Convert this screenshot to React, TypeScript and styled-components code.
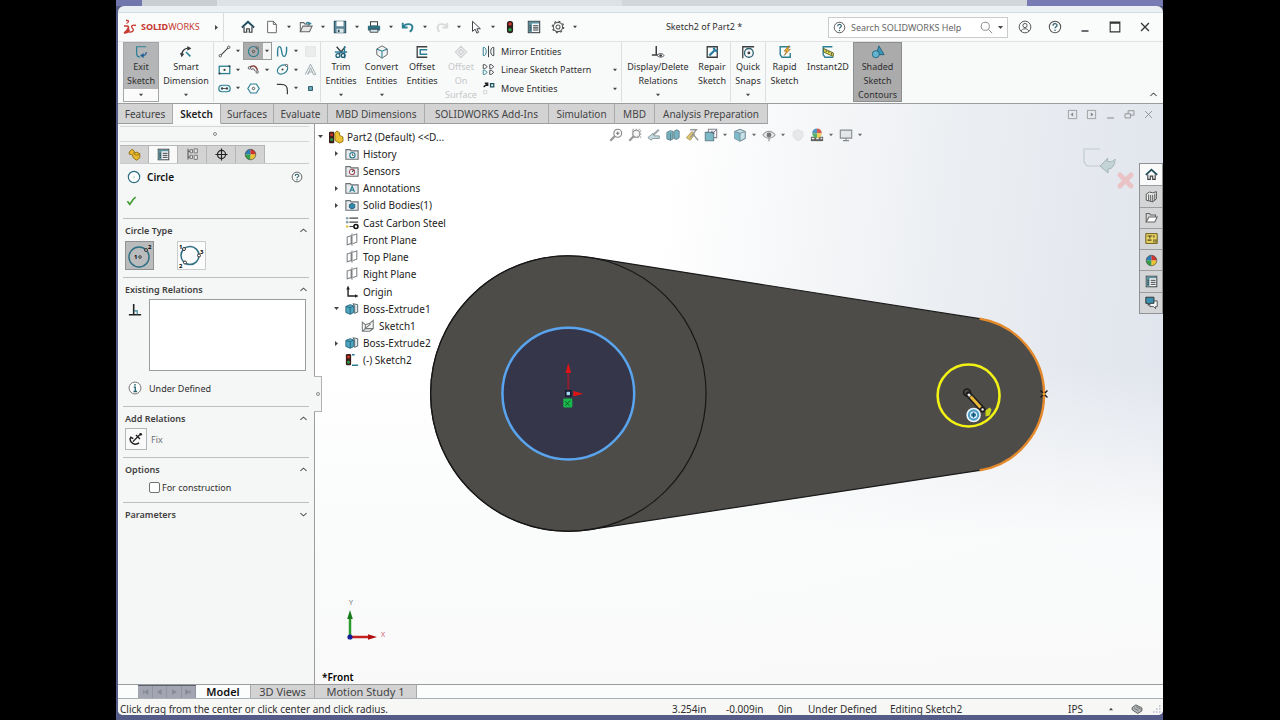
import React from "react";
import styled, { createGlobalStyle, css } from "styled-components";

const color = {
  teal: "#2b7f93",
  sky: "#5fb3cf",
  dark: "#3b3f42",
  ink: "#2f2f2f",
  line: "#9a9c9e",
  soft: "#c9cbcd",
  chrome: "#f6f7f7",
  tab: "#d3d3d4",
  pressed: "#ababac",
};

const GlobalStyle = createGlobalStyle`
  *, *::before, *::after { box-sizing: border-box; }
  body {
    margin: 0;
    background: #000;
    font-family: "Noto Sans", "Open Sans", sans-serif;
    font-size: 9px;
    color: ${color.ink};
  }
  button, input, select {
    font: inherit;
    color: inherit;
    margin: 0;
  }
`;

/* ---------- icons ---------- */

const T = color.teal;
const D = color.dark;

const icons: Record<string, React.ReactNode> = {
  home: (
    <>
      <path d="M1 8.500 8 2l7 6.500" fill="none" stroke="#1f4d5a" strokeWidth="2.200" />
      <path d="M3.500 8v6h3v-4h3v4h3V8" fill="none" stroke={D} strokeWidth="1.400" />
    </>
  ),
  newDoc: <path d="M3 1.500h6.500L13 5v9.500H3zM9.500 1.500V5H13" fill="#fff" stroke="#666" strokeWidth="1.100" />,
  open: (
    <>
      <path d="M1.500 13.500V3h4l1 1.500h4V7" fill="none" stroke="#666" strokeWidth="1.200" />
      <path d="M1.500 13.500 4.500 7H15l-3 6.500z" fill="#e8e8e8" stroke="#666" strokeWidth="1.200" />
      <path d="M8 5c0-3 4-3 4-1M10.500 3 12 5l2-1.500" fill="none" stroke={T} strokeWidth="1.300" />
    </>
  ),
  save: (
    <>
      <path d="M1.500 1.500h13v13h-13z" fill="#5c8798" stroke="#24505f" strokeWidth="1.200" />
      <path d="M4 1.500h8V7H4z" fill="#fff" />
      <path d="M4 10h8v4.500H4z" fill="#dfe6e8" />
      <path d="M5.500 11h2v3h-2z" fill="#24505f" />
    </>
  ),
  print: (
    <>
      <path d="M4 2h8v5H4z" fill="#fff" stroke={D} strokeWidth="1.200" />
      <path d="M1 6.500h14V12H1z" fill="#2f7283" />
      <path d="M3.500 10.500h9V14h-9z" fill="#cfe7ee" stroke={D} strokeWidth="1" />
    </>
  ),
  undo: <path d="M2 3v5.500h5.500M2.500 8c3-5 11-4 10.500 1-.200 2-1.500 3.500-3 4.500" fill="none" stroke={T} strokeWidth="2.200" />,
  redo: <path d="M14 3v5.500H8.500M13.500 8c-3-5-11-4-10.500 1 .200 2 1 3.500 2 4.500" fill="none" stroke="#d8dadb" strokeWidth="2.200" />,
  cursor: <path d="M4 1.500v11.500l3-2.500 2 4.500 2-1-2-4h4z" fill="#fff" stroke={D} strokeWidth="1.100" />,
  lights: (
    <>
      <rect x="4.500" y="1" width="7" height="14" rx="3" fill="#2c211e" />
      <circle cx="8" cy="4.500" r="2" fill="#d2332b" />
      <circle cx="8" cy="11" r="2" fill="#29a04b" />
    </>
  ),
  props: (
    <>
      <rect x="1.500" y="1.500" width="13" height="13" fill="#f3f7f7" stroke={D} strokeWidth="1.200" />
      <path d="M2 2h12v2H2zM2 4h3.500v10H2z" fill="#5a929f" />
      <path d="M7 6.500h6M7 9h6M7 11.500h6M3 6.500h2M3 9h2M3 11.500h2" stroke={D} strokeWidth="1.200" />
    </>
  ),
  gear: (
    <>
      <circle cx="8" cy="8" r="5.300" fill="none" stroke="#555" strokeWidth="1.200" />
      <circle cx="8" cy="8" r="6.500" fill="none" stroke="#555" strokeWidth="1.400" strokeDasharray="2.200 2.880" />
      <circle cx="8" cy="8" r="2.300" fill="none" stroke="#555" strokeWidth="1.200" />
    </>
  ),
  help: (
    <>
      <circle cx="8" cy="8" r="6.500" fill="none" stroke="#555" strokeWidth="1.200" />
      <path d="M5.700 6.500c0-3 4.800-3 4.600-.200 0 1.500-2.300 1.500-2.300 3.200" fill="none" stroke="#2f5f6c" strokeWidth="1.400" />
      <circle cx="8" cy="11.700" r=".9" fill="#2f5f6c" />
    </>
  ),
  user: (
    <>
      <circle cx="8" cy="8" r="6.700" fill="none" stroke="#555" strokeWidth="1.100" />
      <circle cx="8" cy="6.300" r="2.400" fill="none" stroke="#555" strokeWidth="1.100" />
      <path d="M3.700 13c.5-4 8.100-4 8.600 0" fill="none" stroke="#555" strokeWidth="1.100" />
    </>
  ),
  search: <path d="M10.500 10.500 15 15M11.500 6.500a5 5 0 1 1-10 0 5 5 0 0 1 10 0z" fill="none" stroke="#888" strokeWidth="1.200" />,
  minimize: <path d="M4 12.500h8" stroke={D} strokeWidth="1.800" />,
  maximize: <path d="M2.500 2.500h11v11h-11zM2.500 3.500h11" fill="none" stroke="#333" strokeWidth="1.300" />,
  close: <path d="m3.500 3.500 9 9m0-9-9 9" stroke="#333" strokeWidth="1.500" />,
  exitSketch: (
    <>
      <path d="M14 2H3v8c0 3 1 3.500 3 3.500h1" fill="none" stroke="#2d8298" strokeWidth="1.400" />
      <path d="M14 8c0 3-1 4-4 4" fill="none" stroke="#1f5d96" strokeWidth="1.400" />
      <path d="M11 9v6l-4-3z" fill="#1f5d96" />
    </>
  ),
  dimension: (
    <>
      <path d="M3 12C3 6 8 2.500 13 4" fill="none" stroke={D} strokeWidth="1.500" />
      <path d="m1 9 2 5 3-4zM9.500 1 14 4 9.500 6.500z" fill={D} />
      <path d="m8 8 5 5" stroke={T} strokeWidth="1.800" />
    </>
  ),
  line: (
    <>
      <path d="m3 13 10-10" stroke={D} strokeWidth="1.300" />
      <circle cx="2.800" cy="13.200" r="1.500" fill="#fff" stroke={D} />
      <circle cx="13.200" cy="2.800" r="1.500" fill="#fff" stroke={D} />
    </>
  ),
  circle: (
    <>
      <circle cx="8" cy="8" r="6.200" fill="none" stroke={T} strokeWidth="1.400" />
      <circle cx="8" cy="8" r="1.500" fill="none" stroke={D} />
      <circle cx="12.500" cy="3.500" r="1.300" fill="#ddd" stroke={D} />
    </>
  ),
  circlePlain: (
    <>
      <circle cx="8" cy="8" r="6.500" fill="#fff" stroke="#2f6f85" strokeWidth="1.300" />
      <circle cx="8" cy="8" r=".8" fill="#8aa" />
    </>
  ),
  spline: <path d="M2 14V8c0-8 4-8 5 0s5 8 6 0V2" fill="none" stroke={T} strokeWidth="1.700" />,
  ghost: <path d="M2 2h12v12H2z" fill="#ebecec" stroke="#e0e1e1" />,
  rect: (
    <>
      <rect x="1.500" y="4" width="13" height="9" fill="none" stroke={T} strokeWidth="1.600" />
      <circle cx="8" cy="8.500" r="1.300" fill={D} />
      <circle cx="2" cy="13" r="1.300" fill={D} />
      <circle cx="14" cy="4" r="1.300" fill={D} />
    </>
  ),
  arc: (
    <>
      <path d="M3 6c3-4 8-3 10 3" fill="none" stroke="#8b4a44" strokeWidth="1.800" />
      <path d="M5 8c2-1.500 4-1 5 2" fill="none" stroke={D} strokeWidth="1.200" />
      <circle cx="3" cy="6" r="1.500" fill="#fff" stroke={D} />
      <circle cx="12.500" cy="11" r="1.500" fill="#fff" stroke={D} />
    </>
  ),
  ellipse: (
    <>
      <ellipse cx="8" cy="8" rx="7" ry="5" transform="rotate(-35 8 8)" fill="none" stroke={T} strokeWidth="1.400" />
      <circle cx="8" cy="8" r="1.200" fill={D} />
      <circle cx="13" cy="3" r="1.300" fill="#fff" stroke={D} />
    </>
  ),
  letter: <path d="M1.500 14 8 1.500 14.500 14h-3L8 6l-2 5h4M6 11l-1.300 3z" fill="#eef2f3" stroke="#98a3a7" strokeWidth="1.100" />,
  slot: (
    <>
      <rect x="1" y="4" width="14" height="8" rx="4" fill="#e8f3f5" stroke={T} strokeWidth="1.500" />
      <path d="M4 8h8" stroke={D} />
      <circle cx="5" cy="8" r="1.400" fill={D} />
      <circle cx="11" cy="8" r="1.400" fill={D} />
    </>
  ),
  polygon: (
    <>
      <path d="M4.500 2.500h7L15 8l-3.500 5.500h-7L1 8z" fill="none" stroke={T} strokeWidth="1.400" />
      <circle cx="8" cy="8" r="1.500" fill="none" stroke={D} />
    </>
  ),
  fillet: <path d="M1 3h5c6 0 8 2 8 8v4" fill="none" stroke={D} strokeWidth="1.500" />,
  point: <path d="M4.500 4.500h7v7h-7z" fill="#6fa9b9" stroke="#1f5260" strokeWidth="1.600" />,
  trim: (
    <>
      <path d="m3 2 7 8m3-8-7 8" stroke={D} strokeWidth="1.600" />
      <path d="M1 8h14M12 1v14" stroke="#2c7f9a" strokeWidth="1.500" />
      <circle cx="4.500" cy="12" r="2.200" fill="none" stroke="#1e5f78" strokeWidth="1.500" />
      <circle cx="10.500" cy="12" r="2.200" fill="none" stroke="#1e5f78" strokeWidth="1.500" />
    </>
  ),
  convert: (
    <>
      <path d="M2 4.500 8 1l6 3.500v6.500L8 15l-6-4z" fill="#f2f4f4" stroke="#666" strokeWidth="1.100" />
      <path d="M2 4.500 8 7l6-2.500M8 7v8" fill="none" stroke={T} strokeWidth="1.200" />
    </>
  ),
  offset: (
    <>
      <path d="M14 2H2.500v12H14" fill="none" stroke={D} strokeWidth="1.500" />
      <path d="M14 5.500H6v5h8" fill="none" stroke={T} strokeWidth="1.700" />
    </>
  ),
  offsetSurface: <path d="M8 1.500 14.500 8 8 14.500 1.500 8zM8 5l3 3-3 3-3-3z" fill="#ececed" stroke="#cfd1d2" strokeWidth="1.200" />,
  mirror: (
    <>
      <path d="M8 1v14" stroke={D} strokeWidth="1.200" />
      <path d="M1.500 3v10h1.500c3-2 3-8 0-10z" fill="none" stroke={T} strokeWidth="1.200" />
      <path d="M14.500 3v10H13c-3-2-3-8 0-10z" fill="none" stroke={D} strokeWidth="1.200" />
    </>
  ),
  pattern: (
    <>
      <path d="M1.500 2h2l3 2.500-3 2.500h-2zM9.500 2h2l3 2.500-3 2.500h-2zM9.500 9h2l3 2.500-3 2.500h-2z" fill="none" stroke={D} strokeWidth="1.100" />
      <path d="M1.500 9h2l3 2.500-3 2.500h-2z" fill="none" stroke={T} strokeWidth="1.100" />
    </>
  ),
  move: (
    <>
      <path d="m2 6 5-4M3.500 1.500H7V5" fill="none" stroke="#222" strokeWidth="1.700" />
      <path d="M10.500 2h4v4h-4z" fill="#dff0f4" stroke="#1f5260" strokeWidth="1.500" />
      <path d="M2 10.500h4v4H2z" fill="#f4f4f4" stroke="#d0d2d3" />
    </>
  ),
  relations: (
    <>
      <path d="M6 1v10M1 11.500h9" stroke={D} strokeWidth="1.700" />
      <path d="M7 12c2-3 6-3 8 0-2 2.500-6 2.500-8 0z" fill="#fff" stroke={D} />
      <circle cx="11" cy="12" r="1.500" fill={D} />
    </>
  ),
  repair: (
    <>
      <path d="M14 2H2.500v12H14z" fill="none" stroke={D} strokeWidth="1.500" />
      <path d="m5 12 6-6m-1-3 1 3 3 1" fill="none" stroke="#2779a0" strokeWidth="2.500" />
    </>
  ),
  snaps: (
    <>
      <path d="M2 15V2h13" fill="none" stroke={D} strokeWidth="1.500" />
      <circle cx="9" cy="9" r="5" fill="none" stroke="#2f6272" strokeWidth="1.500" />
      <circle cx="9" cy="9" r="1.600" fill={D} />
    </>
  ),
  rapid: (
    <>
      <path d="M14 2H2.500v9l2 3H14V9" fill="none" stroke={T} strokeWidth="1.600" />
      <path d="m12 1-5 6h3l-3 5 7-7h-3l2-4z" fill="#f6b731" stroke="#8a5a12" strokeWidth=".7" />
    </>
  ),
  instant: (
    <>
      <path d="M13 2H2.500v9l2 3H14" fill="none" stroke={T} strokeWidth="1.600" />
      <path d="m3 4 11 5v4L3 8z" fill="#e7dd4c" stroke="#4d5a2a" strokeWidth="1" />
      <path d="M6 6v2m3-1v2m3 0v2" stroke="#333" strokeWidth=".9" />
    </>
  ),
  shaded: (
    <>
      <path d="M9 1 15 11H6z" fill="#3f97b8" stroke="#1f5f78" />
      <circle cx="5.500" cy="10.500" r="4" fill="#62b4cf" stroke="#1f5f78" />
    </>
  ),
  paneLeft: (
    <>
      <path d="M2 2h12v12H2z" fill="none" stroke="#999" strokeWidth="1.300" />
      <path d="M9 5v6L5 8z" fill="#888" />
    </>
  ),
  paneRight: (
    <>
      <path d="M2 2h12v12H2z" fill="none" stroke="#999" strokeWidth="1.300" />
      <path d="M7 5v6l4-3z" fill="#888" />
    </>
  ),
  docMin: <path d="M3 13h10" stroke="#888" strokeWidth="1.500" />,
  docRestore: <path d="M1.500 7h8v6h-8zM6 7V2.500h8.500V9h-5" fill="none" stroke="#8c8c8c" strokeWidth="1.300" />,
  docClose: <path d="m3 3 10 10M13 3 3 13" stroke="#888" strokeWidth="1.300" />,
  part: (
    <>
      <path d="M1.500 5 5 1.500l3 2.500-1 2.500 4-1.500 3.500 2v5l-4 3-4-3-1-3.500-4-1z" fill="#e9b82e" stroke="#8a6a10" strokeWidth="1.100" />
      <path d="m7 7 3.500 2 4-2" fill="none" stroke="#8a6a10" strokeWidth="1" />
    </>
  ),
  config: (
    <>
      <path d="M5 2h3v4H5zM10 1h4v5h-4zM5 9h3v4H5zM10 9h4v5h-4z" fill="#e6e7e7" stroke="#777" strokeWidth="1.200" />
      <path d="M2.500 1v13M2.500 4H5M2.500 11H5" stroke="#555" strokeWidth="1.300" />
    </>
  ),
  target: (
    <>
      <circle cx="8" cy="8" r="5" fill="none" stroke="#222" strokeWidth="1.400" />
      <path d="M8 .5v15M.5 8h15" stroke="#222" strokeWidth="1.400" />
    </>
  ),
  ball: (
    <>
      <path d="M8 8V1.500A6.500 6.500 0 0 0 1.500 8z" fill="#2b7fb6" />
      <path d="M8 8V1.500A6.500 6.500 0 0 1 14.500 8z" fill="#cf352c" />
      <path d="M8 8H1.500A6.500 6.500 0 0 0 8 14.500z" fill="#35a04a" />
      <path d="M8 8h6.500A6.500 6.500 0 0 1 8 14.500z" fill="#e9c432" />
      <circle cx="8" cy="8" r="6.500" fill="none" stroke="#444" strokeWidth=".8" />
    </>
  ),
  check: <path d="m2 9 3.500 4.500C8 9 11 5 14 3" fill="none" stroke="#3c9a2c" strokeWidth="2.400" />,
  perp: (
    <>
      <path d="M6.500 1v12M1 13.500h14" stroke="#222" strokeWidth="1.800" />
      <path d="M7 9h3.500v4" fill="none" stroke={T} strokeWidth="1.200" />
    </>
  ),
  info: (
    <>
      <circle cx="8" cy="8" r="6.800" fill="#fff" stroke="#666" strokeWidth="1" />
      <path d="M6.500 7H8.300v5M6.300 12h4" fill="none" stroke="#23636f" strokeWidth="1.500" />
      <circle cx="8" cy="4.300" r="1" fill="#23636f" />
    </>
  ),
  fix: (
    <>
      <path d="M4.500 11 12 3.500M8 3.500l4.500 4.500M1.500 7c-1 5 5 9 10 5.500M1 9l1-3 3 1.500" fill="none" stroke="#222" strokeWidth="1.600" />
      <circle cx="13.300" cy="2.700" r="1.600" fill="#222" />
    </>
  ),
  chevUp: <path d="m2.500 10.500 5.500-5 5.500 5" fill="none" stroke="#555" strokeWidth="1.800" />,
  chevDown: <path d="m2.500 5.500 5.500 5 5.500-5" fill="none" stroke="#555" strokeWidth="1.800" />,
  rootPart: (
    <>
      <rect x="0" y="2" width="6" height="13" rx="1" fill="#3a1f1b" />
      <circle cx="3" cy="5.500" r="1.700" fill="#d2332b" />
      <circle cx="3" cy="11" r="1.700" fill="#29a04b" />
      <path d="M6.500 4 9 1l3 2v3l4 2v5l-4 2-5-3z" fill="#ecc233" stroke="#94700e" strokeWidth="1" />
    </>
  ),
  folderHistory: (
    <>
      <path d="M1 3h5l1 1.500h8V14H1z" fill="#e9ecee" stroke="#6d7275" strokeWidth="1.300" />
      <circle cx="8.500" cy="9.300" r="3" fill="#fff" stroke={T} strokeWidth="1.300" />
      <path d="M8.500 7.500v2H10" fill="none" stroke={D} />
    </>
  ),
  folderSensor: (
    <>
      <path d="M1 3h5l1 1.500h8V14H1z" fill="#e9ecee" stroke="#6d7275" strokeWidth="1.300" />
      <circle cx="8" cy="9" r="3" fill="#fff" stroke="#a04a5a" strokeWidth="1.200" />
      <path d="m8 9 2-2" stroke={D} strokeWidth="1.200" />
    </>
  ),
  folderNote: (
    <>
      <path d="M1 3h5l1 1.500h8V14H1z" fill="#e9ecee" stroke="#6d7275" strokeWidth="1.300" />
      <path d="m5.500 12.500 2.700-6.500 2.700 6.500M6.500 10.500h3.500" fill="none" stroke={T} strokeWidth="1.300" />
    </>
  ),
  folderSolid: (
    <>
      <path d="M1 3h5l1 1.500h8V14H1z" fill="#e9ecee" stroke="#6d7275" strokeWidth="1.300" />
      <path d="m8 6 3.200 1.500v3.500L8 12.800 5 11V7.500z" fill="#2f88ab" stroke="#1d4f66" strokeWidth=".8" />
    </>
  ),
  material: (
    <>
      <path d="M5 2.500h10M5 7h10M5 12h5" stroke="#444" strokeWidth="1.400" />
      <circle cx="2.500" cy="2.500" r="1.500" fill="#87a4ae" />
      <circle cx="2.500" cy="7" r="1.500" fill="#87a4ae" />
      <circle cx="2.500" cy="12" r="1.500" fill="#e4c64a" />
      <circle cx="12.500" cy="12" r="2.300" fill="#fff" stroke="#111" strokeWidth="1.800" />
    </>
  ),
  plane: <path d="M2.500 4.500 7 3v9l-4.500 1.500zM9 2.500l4.500-1.500v9.500L9 12M8 .5v14" fill="none" stroke="#7d8184" strokeWidth="1.200" />,
  origin: (
    <>
      <path d="M3.500 4v8.500H12" fill="none" stroke="#222" strokeWidth="1.600" />
      <path d="m1.500 5 2-4.500 2 4.500zM11.500 10.500l4 2-4 2z" fill="#222" />
    </>
  ),
  extrude: (
    <>
      <path d="M1 5 6 3l4 1.500V12l-4 2-5-2z" fill="#4ea6c1" stroke="#22627a" strokeWidth="1" />
      <path d="m1 5 5 1.500L10 4.500M6 6.500V14" fill="none" stroke="#22627a" />
      <path d="m9 2 5.500 1v8.500L11 13V4.500z" fill="#dbe7ea" stroke="#59676c" strokeWidth="1.100" />
    </>
  ),
  sketch: (
    <path
      d="M1.500 14V3.500l3.500 3 5-1.500 4-3.500V11l-4 3zM4 11.500l7-6M2 14l3-3h6l3 0M5 6.500V11"
      fill="#f3f4f4"
      stroke="#76797b"
      strokeWidth="1.200"
    />
  ),
  sketchLive: (
    <>
      <rect x="1" y="1" width="6" height="13" rx="1.500" fill="#3a1f1b" />
      <circle cx="4" cy="4.500" r="1.700" fill="#d2332b" />
      <circle cx="4" cy="10.500" r="1.700" fill="#29a04b" />
      <path d="M8 14h7M8 2h3" fill="none" stroke={T} strokeWidth="1.500" />
    </>
  ),
  zoomFit: (
    <>
      <circle cx="10" cy="6" r="4.500" fill="#fafafa" stroke="#666" strokeWidth="1.200" />
      <path d="m6.500 9.500-5 5" stroke="#7a7d7f" strokeWidth="2.600" />
      <path d="M8 6h4m-2-2v4" stroke="#555" strokeWidth="1.100" />
    </>
  ),
  zoomArea: (
    <>
      <path d="M5 1.500h9.500V11H5z" fill="none" stroke="#888" strokeDasharray="2 1.500" />
      <circle cx="9.500" cy="6.500" r="4" fill="#f4f4f4" stroke="#777" strokeWidth="1.200" />
      <path d="m6.500 9.500-5 5" stroke="#7a7d7f" strokeWidth="2.400" />
    </>
  ),
  prevView: (
    <>
      <path d="m6.500 8.500 7-6.500" stroke="#8a9295" strokeWidth="2.400" />
      <path d="m7 6-6 5 4 3 1-2h8V9H8z" fill="#b6d3da" stroke="#6b7f86" strokeWidth="1.100" />
    </>
  ),
  section: (
    <>
      <path d="m1 5 4-2 3 1v8.500l-3 1.500-4-1.500zM9 4l3-2 3 1.500V11l-3 2-3-1z" fill="#54a1b5" stroke="#43656f" strokeWidth="1.100" />
      <path d="M5 6v8" stroke="#2b5664" />
    </>
  ),
  dynamic: (
    <>
      <path d="M1.500 11 8 4l3 3-5 7z" fill="#dcb845" stroke="#8e7a3b" strokeWidth="1" />
      <path d="M6 2h7l-7 9M9 7l6 7" fill="none" stroke="#7b7f80" strokeWidth="1.600" />
    </>
  ),
  orientation: (
    <>
      <path d="M5 1.500h9.500V11H5z" fill="#f5f5f5" stroke="#667" strokeWidth="1.200" />
      <path d="M1.500 5H11v9.500H1.500z" fill="#5fa9bd" stroke="#3f6470" strokeWidth="1.200" />
      <path d="M11 5l3-3M9 3v3h3" fill="none" stroke="#446" strokeWidth="1" />
    </>
  ),
  display: (
    <>
      <path d="m2 4 6-2.500L14 4v8l-6 3-6-3z" fill="#b9dce5" stroke="#51707a" strokeWidth="1.200" />
      <path d="M2 4 8 6v9l-6-3z" fill="#5fa9bd" />
      <path d="m2 4 6 2 6-2M8 6v9" fill="none" stroke="#51707a" />
    </>
  ),
  eye: (
    <>
      <path d="M1 8c4-5.500 10-5.500 14 0-4 5-10 5-14 0z" fill="#eceeee" stroke="#888" strokeWidth="1.200" />
      <circle cx="8" cy="8" r="2.800" fill="#555" />
      <path d="M8 10v5" stroke="#888" strokeWidth="1.500" />
    </>
  ),
  ghostBall: <path d="M8 2l5 2 1 5-4 5H6L2 9l1-5z" fill="#e3e5e6" stroke="#d6d8d9" />,
  scene: (
    <>
      <path d="M1 10h14v5H1z" fill="#3a3a3a" />
      <path d="M2 12h3m2 0h3m2 0h2" stroke="#e8e8e8" strokeWidth="1.600" />
      <path d="M8 6V.5A5.500 5.500 0 0 0 2.500 6z" fill="#2b7fb6" />
      <path d="M8 6V.5A5.500 5.500 0 0 1 13.500 6z" fill="#cf352c" />
      <path d="M8 6H2.500A5.500 5.500 0 0 0 8 11.500z" fill="#35a04a" />
      <path d="M8 6h5.500A5.500 5.500 0 0 1 8 11.500z" fill="#e9c432" />
    </>
  ),
  monitor: <path d="M1.500 2.500h13v9h-13zM8 11.500v3M4.500 14.500h7" fill="#dfe3e5" stroke="#6f7375" strokeWidth="1.300" />,
  library: (
    <>
      <path d="m1.500 5 4-2.500 4 1L14 2v9l-4.500 3.500-8-2z" fill="#eceded" stroke="#555" strokeWidth="1.200" />
      <path d="M4.500 5.500v7.500M7 6v7.500M9.500 6v8.500M12 4.500v8" stroke="#555" strokeWidth="1.200" />
    </>
  ),
  folder: (
    <>
      <path d="M1.500 13.500V3h4l1.500 2h6v2.500" fill="none" stroke="#666" strokeWidth="1.300" />
      <path d="M1.500 13.500 5 7.500h10l-3 6z" fill="#fff" stroke="#666" strokeWidth="1.300" />
    </>
  ),
  palette: (
    <>
      <path d="M1 2h14v12H1z" fill="#ecd668" stroke="#6b5a14" strokeWidth="1.200" />
      <path d="M3 5h6M6 5v3M3 10h5M11 4v3M11 9v4M13.500 9v4" stroke="#4b4519" strokeWidth="1.300" />
    </>
  ),
  forum: (
    <>
      <path d="M6 6h9v7h-2v2.500L10.500 13H6z" fill="#f4f4f4" stroke="#555" strokeWidth="1.200" />
      <path d="M1 1.500h10V9H6l-2 2.500V9H1z" fill="#3b8fb0" stroke="#333" strokeWidth="1.200" />
    </>
  ),
  tag: (
    <>
      <path d="m1.500 6 5-3.500 8 4v4L9 14 1.500 9z" fill="#b3b6b8" stroke="#555" strokeWidth="1.200" />
      <path d="m4 6.500 6 4M7 5l6 3.500" stroke="#5c6063" />
    </>
  ),
  grip: <path d="M12 3h2v2h-2zM8 7h2v2H8zM12 7h2v2h-2zM4 11h2v2H4zM8 11h2v2H8zM12 11h2v2h-2z" fill="#b4bccb" />,
};

const Svg = styled.svg`
  display: block;
  flex: none;
  overflow: visible;
`;

function Icon({ name, size = 14 }: { name: string; size?: number }) {
  return (
    <Svg width={size} height={size} viewBox="0 0 16 16" aria-hidden="true">
      {icons[name]}
    </Svg>
  );
}

const CaretSvg = styled(Svg)`
  fill: #444;
`;

function Caret({ dir = "down", size = 4 }: { dir?: "down" | "right" | "up"; size?: number }) {
  const d = dir === "down" ? "M0 1h5L2.500 4z" : dir === "up" ? "M0 4h5L2.500 1z" : "M1 0v5l3-2.500z";
  return (
    <CaretSvg width={size} height={size} viewBox="0 0 5 5" aria-hidden="true">
      <path d={d} />
    </CaretSvg>
  );
}

/* ---------- window frame ---------- */

const Desktop = styled.div`
  min-height: 100vh;
  display: flex;
  flex-direction: column;
  margin: 0 117px 0 116px;
  padding-bottom: 5px;
  background: #565c88;
`;

const BackStrip = styled.div`
  height: 6px;
  display: flex;
  background: #d5d9dc;
`;

const StripPart = styled.div<{ $basis: string; $tone: string }>`
  flex: ${(p) => p.$basis};
  background: ${(p) => p.$tone};
`;

const WindowFrame = styled.div`
  flex: 1;
  display: flex;
  flex-direction: column;
  margin-left: 2px;
  padding-top: 6px;
  background: #eaf0f3;
  border-radius: 6px 6px 5px 5px;
  overflow: hidden;
`;

const plainButton = css`
  display: flex;
  align-items: center;
  justify-content: center;
  padding: 0;
  border: 0;
  background: none;
`;

/* ---------- title bar ---------- */

const TitleBar = styled.header`
  height: 29px;
  display: flex;
  align-items: center;
  padding-right: 3px;
  background: #fafbfb;
  border-top: 1px solid #d3dde1;
`;

const Brand = styled.div`
  width: 106px;
  height: 28px;
  display: flex;
  align-items: center;
  gap: 4px;
  padding-left: 5px;
  border-right: 1px solid #d9dbdc;
  color: #c63a32;
`;

const BrandName = styled.span`
  flex: 1;
  font-size: 9px;
  line-height: 12px;
`;

const BrandButton = styled.button`
  ${plainButton}
  width: 14px;
  height: 16px;
`;

const QuickAccess = styled.nav`
  display: flex;
  align-items: center;
  padding-left: 12px;
`;

const IconButton = styled.button<{ $w?: number }>`
  ${plainButton}
  width: ${(p) => p.$w ?? 24}px;
  height: 20px;
`;

const DocTitle = styled.h1`
  flex: 1;
  margin: 0;
  font-size: 9px;
  font-weight: 400;
  line-height: 12px;
  text-align: center;
  white-space: nowrap;
`;

const SearchBox = styled.label`
  width: 180px;
  height: 21px;
  display: flex;
  align-items: center;
  gap: 5px;
  margin-right: 2px;
  padding: 0 4px;
  background: #fff;
  border: 1px solid ${color.soft};
`;

const SearchInput = styled.input`
  flex: 1;
  min-width: 0;
  padding: 0;
  border: 0;
  outline: 0;
  background: none;
  font-size: 9px;
  &::placeholder {
    color: #666;
    opacity: 1;
  }
`;

/* ---------- ribbon ---------- */

const Ribbon = styled.div`
  height: 62px;
  display: flex;
  padding-left: 5px;
  background: #f8f9f9;
  border-top: 1px solid #e0e2e3;
`;

const Rule = styled.div`
  width: 1px;
  margin-bottom: 1px;
  background: #dcdedf;
`;

const BigTool = styled.button<{ $w: number; $state?: "active" | "pressed" | "disabled" }>`
  ${plainButton}
  width: ${(p) => p.$w}px;
  height: 60px;
  flex-direction: column;
  justify-content: flex-start;
  gap: 1px;
  padding-top: 3px;
  line-height: 14px;
  white-space: pre;
  color: ${(p) => (p.$state === "disabled" ? "#c6c8c9" : color.ink)};
  ${(p) =>
    p.$state === "pressed" &&
    css`
      background: ${color.pressed};
      border: 1px solid #8d8e8f;
      padding-top: 2px;
    `}
  ${(p) =>
    p.$state === "active" &&
    css`
      background: linear-gradient(#b4b5b6 46px, #fbfbfb 46px);
      border: 1px solid #a4a5a6;
      padding-top: 2px;
    `}
`;

const CaretSlot = styled.span`
  height: 11px;
  display: flex;
  align-items: center;
`;

const ToolGrid = styled.div`
  width: 106px;
  height: 56px;
  display: grid;
  grid-template-columns: 29px 29px 29px 19px;
  grid-auto-rows: 1fr;
`;

const SplitTool = styled.div<{ $on?: boolean }>`
  display: flex;
  height: 18px;
  border: 1px solid ${(p) => (p.$on ? "#98999a" : "transparent")};
  background: ${(p) => (p.$on ? `linear-gradient(90deg, ${color.pressed} 19px, #f4f4f4 19px)` : "none")};
`;

const SplitMain = styled.button`
  ${plainButton}
  width: 18px;
`;

const SplitCaret = styled.button`
  ${plainButton}
  width: 9px;
`;

const ToolList = styled.div`
  width: 141px;
  height: 56px;
  display: grid;
  grid-auto-rows: 1fr;
`;

const ListTool = styled.button`
  ${plainButton}
  justify-content: flex-start;
  gap: 6px;
  padding: 0 4px 0 2px;
`;

const ListLabel = styled.span`
  flex: 1;
  text-align: left;
`;

const CollapseButton = styled.button`
  ${plainButton}
  align-self: flex-end;
  width: 20px;
  height: 18px;
  margin-left: auto;
`;

/* ---------- command tabs ---------- */

const Workspace = styled.div`
  flex: 1;
  display: flex;
  flex-direction: column;
  background:
    linear-gradient(180deg, transparent 45%, rgba(250, 251, 251, 0.95) 74%, #f9f9fa 100%),
    linear-gradient(97deg, #fff 50%, #eaedf1 78%, #dfe3ec 100%);
`;

const TabRow = styled.div`
  height: 21px;
  display: flex;
  border-top: 1px solid ${color.line};
`;

const CommandTab = styled.button<{ $w: number; $on?: boolean }>`
  ${plainButton}
  width: ${(p) => p.$w}px;
  font-size: 10px;
  line-height: 14px;
  white-space: nowrap;
  font-weight: ${(p) => (p.$on ? 600 : 400)};
  color: ${(p) => (p.$on ? "#1d1d1d" : "#444")};
  background: ${(p) => (p.$on ? "#fafafa" : color.tab)};
  border-right: 1px solid #a9aaab;
  border-bottom: 1px solid ${(p) => (p.$on ? "#fafafa" : "#9c9d9e")};
`;

const DocButtons = styled.div`
  display: flex;
  margin-left: auto;
  padding-right: 5px;
`;

/* ---------- property manager ---------- */

const Main = styled.div`
  flex: 1;
  display: flex;
`;

const Panel = styled.aside`
  position: relative;
  width: 197px;
  padding: 2px 5px 0 2px;
  background: #f5f6f6;
  border-right: 1px solid ${color.line};
`;

const PanelGrip = styled.div`
  height: 16px;
  display: flex;
  align-items: center;
  justify-content: center;
  border-top: 1px solid #d4d6d7;
  border-bottom: 1px solid #d4d6d7;
`;

const Dot = styled.span`
  width: 4px;
  height: 4px;
  border: 1px solid #8a8c8e;
  border-radius: 50%;
`;

const PanelTabs = styled.div`
  display: flex;
  padding-top: 3px;
  border-bottom: 1px solid #c8cacb;
`;

const PanelTab = styled.button<{ $on?: boolean }>`
  ${plainButton}
  width: 29px;
  height: 18px;
  background: ${(p) => (p.$on ? "#f9f9f9" : color.tab)};
  border-top: 1px solid #b4b5b6;
  border-right: 1px solid #b4b5b6;
`;

const PanelTitle = styled.div`
  height: 26px;
  display: flex;
  align-items: center;
  gap: 6px;
  padding: 0 5px 0 7px;
`;

const PanelName = styled.h2`
  flex: 1;
  margin: 0;
  font-size: 10px;
  font-weight: 600;
  line-height: 14px;
  color: #111;
`;

const PanelActions = styled.div`
  height: 28px;
  padding: 0 5px;
`;

const Section = styled.section<{ $h: number }>`
  min-height: ${(p) => p.$h}px;
  margin-left: 3px;
  padding: 3px 1px 0 2px;
  border-top: 1px solid #bcbebf;
`;

const SectionHead = styled.h3`
  height: 17px;
  display: flex;
  align-items: center;
  justify-content: space-between;
  margin: 0;
  font-size: 9px;
  font-weight: 600;
  line-height: 12px;
  color: #3f3f3f;
`;

const ChevronButton = styled.button`
  ${plainButton}
  width: 10px;
  height: 14px;
`;

const TypeRow = styled.div`
  display: flex;
  gap: 23px;
  padding-top: 2px;
`;

const TypeButton = styled.button<{ $on?: boolean }>`
  ${plainButton}
  width: 29px;
  height: 29px;
  background: ${(p) => (p.$on ? "#b9bbbc" : "#fcfcfc")};
  border: 1px solid ${(p) => (p.$on ? "#8f9192" : "#c9cbcc")};
`;

const RelationRow = styled.div`
  display: flex;
  align-items: flex-start;
  padding: 1px 2px 0 3px;
`;

const RelationIcon = styled.span`
  width: 21px;
  padding-top: 4px;
`;

const RelationList = styled.select`
  flex: 1;
  height: 72px;
  padding: 0;
  background: #fff;
  border: 1px solid ${color.line};
  border-radius: 0;
  outline: 0;
`;

const StatusLine = styled.div`
  height: 34px;
  display: flex;
  align-items: center;
  gap: 7px;
  padding-left: 3px;
`;

const FixRow = styled.label`
  display: flex;
  align-items: center;
  gap: 4px;
  padding-top: 1px;
  color: #6f7172;
`;

const FixButton = styled.button`
  ${plainButton}
  width: 22px;
  height: 22px;
  background: #fafafa;
  border: 1px solid #b4b6b7;
`;

const CheckRow = styled.label`
  display: flex;
  align-items: center;
  gap: 2px;
  padding: 3px 0 0 24px;
`;

const CheckBox = styled.input`
  appearance: none;
  width: 11px;
  height: 11px;
  background: #fff;
  border: 1px solid #6f7173;
  border-radius: 2px;
`;

const SplitterHandle = styled.button`
  ${plainButton}
  position: absolute;
  top: 252px;
  right: -8px;
  width: 8px;
  height: 36px;
  background: #f5f6f6;
  border: 1px solid #b0b2b3;
  border-left: 0;
`;

/* ---------- graphics area ---------- */

const Viewport = styled.main`
  position: relative;
  flex: 1;
  display: grid;
  grid-template-columns: 1fr auto 1fr;
  grid-template-rows: 1fr auto;
`;

const ModelSvg = styled.svg`
  position: absolute;
  inset: 0;
  width: 100%;
  height: 100%;
`;

const Tree = styled.ul`
  position: relative;
  height: 241px;
  display: grid;
  grid-auto-rows: 1fr;
  margin: 4px 0 0;
  padding: 0;
  list-style: none;
  font-size: 10px;
  line-height: 14px;
  color: #222;
`;

const TreeRow = styled.li<{ $level: number }>`
  display: flex;
  align-items: center;
  gap: 4px;
  padding-left: ${(p) => p.$level * 16}px;
  white-space: nowrap;
`;

const TreeCaret = styled.span`
  width: 10px;
  height: 8px;
  display: flex;
  align-items: center;
  justify-content: center;
`;

const ViewTools = styled.div`
  position: relative;
  height: 22px;
  display: flex;
  align-items: center;
  padding-right: 7px;
  opacity: 0.8;
`;

const RightSide = styled.div`
  position: relative;
  display: flex;
  justify-content: flex-end;
  align-items: flex-start;
`;

const Confirm = styled.svg`
  width: 54px;
  height: 44px;
  margin: 22px 3px 0 0;
`;

const TaskPane = styled.div`
  height: 151px;
  width: 24px;
  display: grid;
  grid-auto-rows: 1fr;
  margin-top: 39px;
  border: 1px solid #8f9193;
`;

const TaskTab = styled.button<{ $on?: boolean }>`
  ${plainButton}
  background: ${(p) => (p.$on ? "#fafafa" : "#d4d5d7")};
  & + & {
    border-top: 1px solid #9b9d9f;
  }
`;

const ViewCorner = styled.div`
  position: relative;
  padding-left: 7px;
`;

const Triad = styled.svg`
  display: block;
  width: 54px;
  height: 46px;
  margin: 0 0 25px 16px;
`;

const ViewName = styled.div`
  font-size: 10px;
  font-weight: 600;
  line-height: 14px;
  color: #000;
`;

/* ---------- bottom bars ---------- */

const SheetBar = styled.div`
  height: 15px;
  display: flex;
  padding-left: 20px;
  background: #fbfcfc;
  border-top: 1px solid ${color.line};
  border-bottom: 1px solid #a9b0b3;
`;

const SheetNav = styled.div`
  width: 58px;
  display: grid;
  grid-template-columns: repeat(4, 1fr);
  background: #a3a5b2;
  border-top: 1px solid #5d6070;
`;

const SheetNavButton = styled.button`
  ${plainButton}
  border-right: 1px solid #9294a3;
`;

const SheetTab = styled.button<{ $w: number; $on?: boolean }>`
  ${plainButton}
  width: ${(p) => p.$w}px;
  font-size: 11px;
  line-height: 13px;
  white-space: nowrap;
  font-weight: ${(p) => (p.$on ? 600 : 400)};
  color: ${(p) => (p.$on ? "#111" : "#444")};
  background: ${(p) => (p.$on ? "#fbfcfc" : color.tab)};
  border-right: 1px solid #a9aaab;
`;

const StatusBar = styled.footer`
  height: 16px;
  display: flex;
  align-items: center;
  padding: 3px 1px 0 2px;
  font-size: 10px;
  line-height: 14px;
  white-space: nowrap;
  background: #f7f7f5;
`;

const Message = styled.span`
  flex: 1;
`;

const Cell = styled.span<{ $w: number }>`
  width: ${(p) => p.$w}px;
`;

const UnitButton = styled.button`
  ${plainButton}
  width: 63px;
  justify-content: flex-start;
  gap: 26px;
`;

/* ---------- data ---------- */

const quickTools: [string, string, boolean][] = [
  ["home", "Home", false],
  ["newDoc", "New", true],
  ["open", "Open", true],
  ["save", "Save", true],
  ["print", "Print", true],
  ["undo", "Undo", true],
  ["redo", "Redo", true],
  ["cursor", "Select", true],
  ["lights", "Rebuild", false],
  ["props", "File properties", false],
  ["gear", "Options", true],
];

const sketchTools: [string, boolean][] = [
  ["line", true], ["circle", true], ["spline", true], ["ghost", false],
  ["rect", true], ["arc", true], ["ellipse", true], ["letter", false],
  ["slot", true], ["polygon", false], ["fillet", true], ["point", false],
];

const commandTabs: [string, number][] = [
  ["Features", 55], ["Sketch", 48], ["Surfaces", 53], ["Evaluate", 54], ["MBD Dimensions", 97],
  ["SOLIDWORKS Add-Ins", 124], ["Simulation", 66], ["MBD", 40], ["Analysis Preparation", 113],
];

const treeRows: [number, "down" | "right" | "", string, string][] = [
  [0, "down", "rootPart", "Part2 (Default) <<D..."],
  [1, "right", "folderHistory", "History"],
  [1, "", "folderSensor", "Sensors"],
  [1, "right", "folderNote", "Annotations"],
  [1, "right", "folderSolid", "Solid Bodies(1)"],
  [1, "", "material", "Cast Carbon Steel"],
  [1, "", "plane", "Front Plane"],
  [1, "", "plane", "Top Plane"],
  [1, "", "plane", "Right Plane"],
  [1, "", "origin", "Origin"],
  [1, "down", "extrude", "Boss-Extrude1"],
  [2, "", "sketch", "Sketch1"],
  [1, "right", "extrude", "Boss-Extrude2"],
  [1, "", "sketchLive", "(-) Sketch2"],
];

const viewTools: [string, boolean][] = [
  ["zoomFit", false], ["zoomArea", false], ["prevView", false], ["section", false], ["dynamic", false],
  ["orientation", true], ["display", true], ["eye", true], ["ghostBall", false], ["scene", true], ["monitor", true],
];

const taskTabs = ["home", "library", "folder", "palette", "ball", "props", "forum"];

/* ---------- pieces ---------- */

interface BigProps {
  icon: string;
  label: string;
  w: number;
  caret?: boolean;
  state?: "active" | "pressed" | "disabled";
}

function Big({ icon, label, w, caret, state }: BigProps) {
  return (
    <BigTool $w={w} $state={state} disabled={state === "disabled"}>
      <Icon name={icon} />
      <span>{label}</span>
      {caret && (
        <CaretSlot>
          <Caret />
        </CaretSlot>
      )}
    </BigTool>
  );
}

function Head({ text, open = true }: { text: string; open?: boolean }) {
  return (
    <SectionHead>
      {text}
      <ChevronButton aria-label={`Toggle ${text}`}>
        <Icon name={open ? "chevUp" : "chevDown"} size={9} />
      </ChevronButton>
    </SectionHead>
  );
}

function Model() {
  return (
    <ModelSvg viewBox="315 124 848 561" aria-label="Part model">
      <path
        d="M589 257.600 980 319A77 77 0 0 1 980 471L589 530.400A138 138 0 1 1 589 257.600z"
        fill="#4d4c49"
        stroke="#1b1b1b"
        strokeWidth="1.200"
      />
      <circle cx="568" cy="394" r="138" fill="none" stroke="#171717" strokeWidth="1.200" />
      <path d="M980 319A77 77 0 0 1 980 471" fill="none" stroke="#e58a2c" strokeWidth="2.400" />
      <circle cx="568" cy="394" r="66" fill="#35364a" stroke="#5aa4ee" strokeWidth="2.500" />
      <path d="M568 390v-16" stroke="#8e2030" strokeWidth="2" />
      <path d="m568 363.500 2.800 10h-5.600zM573 391.500l10 2.700-10 2.700z" fill="#e01414" />
      <rect x="565.500" y="391.500" width="5" height="5" fill="#a8d4f4" stroke="#10182a" strokeWidth="1.500" />
      <rect x="563" y="399" width="9" height="9" rx="1" fill="#19b84a" />
      <path d="m565 406 5-5m-5 1 4 4" stroke="#0b5a24" />
      <circle cx="969" cy="396" r="31" fill="none" stroke="#f1f116" strokeWidth="2.600" />
      <circle cx="967.500" cy="393" r="3.500" fill="none" stroke="#1c1c1c" strokeWidth="1.500" />
      <path d="m969 395 14 15" stroke="#1c1c1c" strokeWidth="6" strokeLinecap="round" />
      <path d="m971 397 10 11" stroke="#e9b73a" strokeWidth="3" />
      <path d="m968.500 394.500 2 2.200" stroke="#eee" strokeWidth="2.500" />
      <circle cx="983" cy="410" r="1.200" fill="#eee" />
      <path d="m986 411 4-3 2 2-2 6-4 1z" fill="#c9d61c" />
      <circle cx="974" cy="415.500" r="6.500" fill="#4c9cc4" stroke="#e9f5fb" strokeWidth="1.600" />
      <circle cx="974" cy="415.500" r="3" fill="none" stroke="#e9f5fb" strokeWidth="1.200" />
      <path d="M971.500 415.500h5m-2.500-2.500v5" stroke="#12476a" />
      <path d="m1041 391 7 7m-7 0 7-7" stroke="#1d1d1d" strokeWidth="1.500" />
      <circle cx="1044.500" cy="394.500" r="1.500" fill="#f0a030" />
    </ModelSvg>
  );
}

export default function App() {
  return (
    <>
      <GlobalStyle />
      <Desktop>
        <BackStrip>
          <StripPart $basis="0 0 26px" $tone="#7176ad" />
          <StripPart $basis="0 0 75px" $tone="#c9ced3" />
          <StripPart $basis="2 1 0" $tone="#dee2e4" />
          <StripPart $basis="2 1 0" $tone="#d3d7da" />
          <StripPart $basis="0 0 136px" $tone="#787bb3" />
        </BackStrip>
        <WindowFrame>
          <TitleBar>
            <Brand>
              <Svg width={14} height={16} viewBox="0 0 14 16" aria-hidden="true">
                <path
                  d="M3 1.500c3-.5 3.500 1.500.500 3M1 7h3c2 0 2 3-3 7M4 7c3 0 2 5-3 7 3 0 5-1.500 5.500-3.500M13 6.500c-4-1-5.500 1-3.500 2.700 2 1.800.500 4.300-4 3.800"
                  fill="none"
                  stroke="#c63a32"
                  strokeWidth="1.300"
                />
              </Svg>
              <BrandName>
                <b>SOLID</b>WORKS
              </BrandName>
              <BrandButton aria-label="Show menu">
                <Caret dir="right" size={5} />
              </BrandButton>
            </Brand>
            <QuickAccess aria-label="Quick access">
              {quickTools.map(([icon, label, caret]) => (
                <React.Fragment key={icon}>
                  <IconButton aria-label={label}>
                    <Icon name={icon} />
                  </IconButton>
                  {caret && (
                    <IconButton $w={10} aria-label={`${label} options`}>
                      <Caret />
                    </IconButton>
                  )}
                </React.Fragment>
              ))}
            </QuickAccess>
            <DocTitle>Sketch2 of Part2 *</DocTitle>
            <SearchBox>
              <Icon name="help" size={13} />
              <SearchInput type="text" aria-label="Search help" placeholder="Search SOLIDWORKS Help" />
              <Icon name="search" size={13} />
              <Caret size={5} />
            </SearchBox>
            {["user", "help", "minimize", "maximize", "close"].map((name) => (
              <IconButton key={name} $w={30} aria-label={name}>
                <Icon name={name} size={14} />
              </IconButton>
            ))}
          </TitleBar>

          <Ribbon>
            <Big icon="exitSketch" label={"Exit\nSketch"} w={36} caret state="active" />
            <Big icon="dimension" label={"Smart\nDimension"} w={54} caret />
            <Rule />
            <ToolGrid>
              {sketchTools.map(([icon, caret]) => (
                <SplitTool key={icon} $on={icon === "circle"}>
                  <SplitMain aria-label={icon}>
                    <Icon name={icon} size={icon === "point" ? 9 : 13} />
                  </SplitMain>
                  {caret && (
                    <SplitCaret aria-label={`${icon} options`}>
                      <Caret />
                    </SplitCaret>
                  )}
                </SplitTool>
              ))}
            </ToolGrid>
            <Rule />
            <Big icon="trim" label={"Trim\nEntities"} w={40} caret />
            <Big icon="convert" label={"Convert\nEntities"} w={41} caret />
            <Big icon="offset" label={"Offset\nEntities"} w={40} />
            <Big icon="offsetSurface" label={"Offset\nOn\nSurface"} w={38} state="disabled" />
            <ToolList>
              <ListTool>
                <Icon name="mirror" size={13} />
                <ListLabel>Mirror Entities</ListLabel>
              </ListTool>
              <ListTool>
                <Icon name="pattern" size={13} />
                <ListLabel>Linear Sketch Pattern</ListLabel>
                <Caret />
              </ListTool>
              <ListTool>
                <Icon name="move" size={13} />
                <ListLabel>Move Entities</ListLabel>
                <Caret />
              </ListTool>
            </ToolList>
            <Rule />
            <Big icon="relations" label={"Display/Delete\nRelations"} w={72} caret />
            <Big icon="repair" label={"Repair\nSketch"} w={36} />
            <Rule />
            <Big icon="snaps" label={"Quick\nSnaps"} w={34} caret />
            <Rule />
            <Big icon="rapid" label={"Rapid\nSketch"} w={37} />
            <Big icon="instant" label="Instant2D" w={50} />
            <Big icon="shaded" label={"Shaded\nSketch\nContours"} w={49} state="pressed" />
            <CollapseButton aria-label="Collapse ribbon">
              <Icon name="chevUp" size={9} />
            </CollapseButton>
          </Ribbon>

          <Workspace>
            <TabRow>
              {commandTabs.map(([label, w]) => (
                <CommandTab key={label} $w={w} $on={label === "Sketch"}>
                  {label}
                </CommandTab>
              ))}
              <DocButtons>
                {["paneLeft", "paneRight", "docMin", "docRestore", "docClose"].map((name) => (
                  <IconButton key={name} $w={19} aria-label={name}>
                    <Icon name={name} size={11} />
                  </IconButton>
                ))}
              </DocButtons>
            </TabRow>

            <Main>
              <Panel>
                <PanelGrip>
                  <Dot />
                </PanelGrip>
                <PanelTabs>
                  {["part", "props", "config", "target", "ball"].map((name) => (
                    <PanelTab key={name} $on={name === "props"} aria-label={name}>
                      <Icon name={name} size={13} />
                    </PanelTab>
                  ))}
                </PanelTabs>
                <PanelTitle>
                  <Icon name="circlePlain" />
                  <PanelName>Circle</PanelName>
                  <IconButton $w={14} aria-label="Help">
                    <Icon name="help" size={12} />
                  </IconButton>
                </PanelTitle>
                <PanelActions>
                  <IconButton $w={12} aria-label="OK">
                    <Icon name="check" size={11} />
                  </IconButton>
                </PanelActions>

                <Section $h={59}>
                  <Head text="Circle Type" />
                  <TypeRow>
                    <TypeButton $on aria-label="Center circle" aria-pressed="true">
                      <Svg width={27} height={27} viewBox="0 0 27 27">
                        <circle cx="13" cy="15" r="10" fill="none" stroke="#2f6f85" strokeWidth="1.500" />
                        <circle cx="20" cy="8" r="1.500" fill="#b9bbbc" stroke="#333" />
                        <text x="8" y="17" fontSize="6" fontWeight="700">1</text>
                        <circle cx="14" cy="15" r="1.300" fill="none" stroke="#444" />
                        <text x="22" y="7" fontSize="6" fontWeight="700">2</text>
                      </Svg>
                    </TypeButton>
                    <TypeButton aria-label="Perimeter circle">
                      <Svg width={27} height={27} viewBox="0 0 27 27">
                        <circle cx="12" cy="13.500" r="9" fill="none" stroke="#2f6f85" strokeWidth="1.500" />
                        <circle cx="6" cy="7" r="1.500" fill="#fff" stroke="#333" />
                        <circle cx="21" cy="13.500" r="1.500" fill="#fff" stroke="#333" />
                        <circle cx="7" cy="20.500" r="1.500" fill="#fff" stroke="#333" />
                        <text x="1" y="7" fontSize="6" fontWeight="700">1</text>
                        <text x="1" y="26" fontSize="6" fontWeight="700">2</text>
                        <text x="22" y="12" fontSize="6" fontWeight="700">3</text>
                      </Svg>
                    </TypeButton>
                  </TypeRow>
                </Section>

                <Section $h={129}>
                  <Head text="Existing Relations" />
                  <RelationRow>
                    <RelationIcon>
                      <Icon name="perp" />
                    </RelationIcon>
                    <RelationList size={4} aria-label="Existing relations" />
                  </RelationRow>
                  <StatusLine>
                    <Icon name="info" />
                    Under Defined
                  </StatusLine>
                </Section>

                <Section $h={51}>
                  <Head text="Add Relations" />
                  <FixRow>
                    <FixButton>
                      <Icon name="fix" />
                    </FixButton>
                    Fix
                  </FixRow>
                </Section>

                <Section $h={45}>
                  <Head text="Options" />
                  <CheckRow>
                    <CheckBox type="checkbox" />
                    For construction
                  </CheckRow>
                </Section>

                <Section $h={24}>
                  <Head text="Parameters" open={false} />
                </Section>
                <SplitterHandle aria-label="Collapse panel">
                  <Dot />
                </SplitterHandle>
              </Panel>

              <Viewport>
                <Model />
                <Tree>
                  {treeRows.map(([level, caret, icon, label]) => (
                    <TreeRow key={label} $level={level}>
                      <TreeCaret>{caret && <Caret dir={caret} size={5} />}</TreeCaret>
                      <Icon name={icon} />
                      {label}
                    </TreeRow>
                  ))}
                </Tree>
                <ViewTools>
                  {viewTools.map(([icon, caret]) => (
                    <React.Fragment key={icon}>
                      <IconButton $w={19} aria-label={icon}>
                        <Icon name={icon} />
                      </IconButton>
                      {caret && (
                        <IconButton $w={10} aria-label={`${icon} options`}>
                          <Caret />
                        </IconButton>
                      )}
                    </React.Fragment>
                  ))}
                </ViewTools>
                <RightSide>
                  <Confirm viewBox="0 0 54 44" aria-hidden="true">
                    <path d="M18 3H2v13l3 4h15" fill="none" stroke="#c2cbce" strokeWidth="1.200" />
                    <path d="M33 13c-2 3-5 3-8 2l1-3-8 8 8 7v-4c5 0 7-5 7-10z" fill="#c4d3d4" stroke="#a3b4b6" />
                    <path d="m38 29 11 11m0-11L38 40" stroke="#eac3c6" strokeWidth="5" strokeLinecap="round" />
                  </Confirm>
                  <TaskPane>
                    {taskTabs.map((name) => (
                      <TaskTab key={name} $on={name === "home"} aria-label={name}>
                        <Icon name={name} size={13} />
                      </TaskTab>
                    ))}
                  </TaskPane>
                </RightSide>
                <ViewCorner>
                  <Triad viewBox="338 598 54 46" aria-hidden="true">
                    <path d="M350 636v-18" stroke="#2a9a2c" strokeWidth="2.500" />
                    <path d="m350 609 2.800 9h-5.600z" fill="#187a1c" />
                    <path d="M350 636h18" stroke="#c32020" strokeWidth="2.500" />
                    <path d="m377 636-9 2.800v-5.600z" fill="#b01212" />
                    <circle cx="350" cy="636" r="2.600" fill="#14209a" />
                    <text x="349" y="604" fontSize="7" fill="#777">Y</text>
                    <text x="381" y="636" fontSize="7" fill="#d0606a">X</text>
                  </Triad>
                  <ViewName>*Front</ViewName>
                </ViewCorner>
              </Viewport>
            </Main>
          </Workspace>

          <SheetBar>
            <SheetNav>
              {["M9 1v6L4 4zM3 1v6", "M8 1v6L3 4z", "M3 1v6l5-3z", "M2 1v6l5-3zM8 1v6"].map((d) => (
                <SheetNavButton key={d} aria-label="Scroll tabs">
                  <Svg width={8} height={6} viewBox="0 0 10 8">
                    <path d={d} fill="#858897" stroke="#858897" />
                  </Svg>
                </SheetNavButton>
              ))}
            </SheetNav>
            <SheetTab $w={55} $on>Model</SheetTab>
            <SheetTab $w={64}>3D Views</SheetTab>
            <SheetTab $w={102}>Motion Study 1</SheetTab>
          </SheetBar>
          <StatusBar>
            <Message>Click drag from the center or click center and click radius.</Message>
            <Cell $w={54}>3.254in</Cell>
            <Cell $w={52}>-0.009in</Cell>
            <Cell $w={30}>0in</Cell>
            <Cell $w={82}>Under Defined</Cell>
            <Cell $w={178}>Editing Sketch2</Cell>
            <UnitButton>
              IPS
              <Caret dir="up" />
            </UnitButton>
            <Icon name="tag" size={12} />
            <Cell $w={7} />
            <Icon name="grip" size={12} />
          </StatusBar>
        </WindowFrame>
      </Desktop>
    </>
  );
}
